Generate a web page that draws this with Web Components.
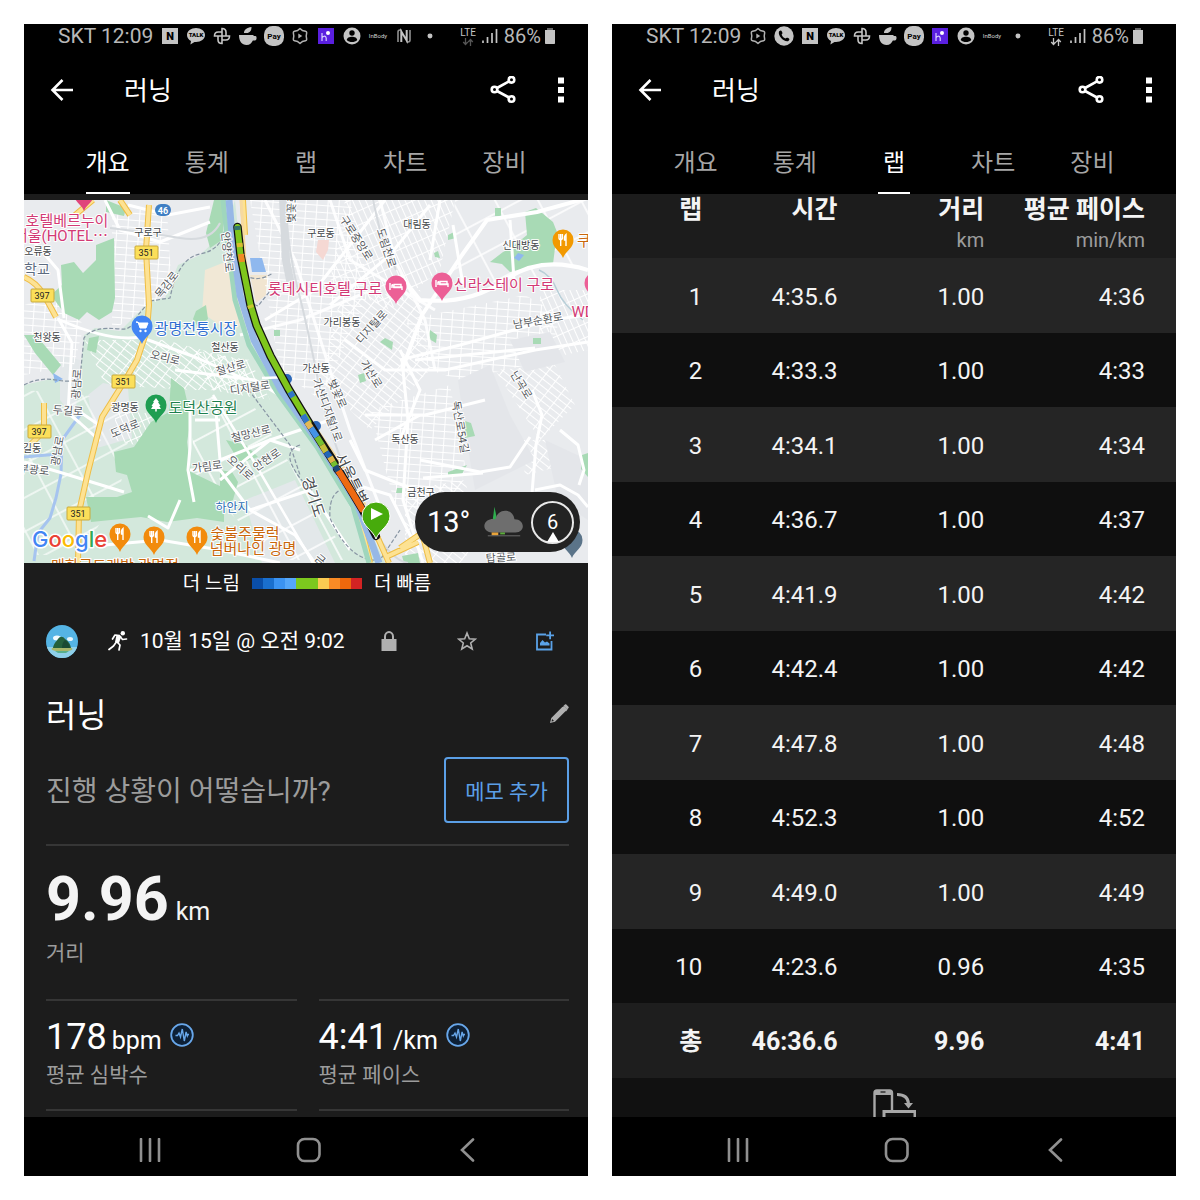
<!DOCTYPE html>
<html lang="ko">
<head>
<meta charset="utf-8">
<meta name="viewport" content="width=device-width, initial-scale=1">
<title>러닝</title>
<style>
  body { margin: 0; background: #fff; font-family: Roboto, "Noto Sans CJK KR", sans-serif; color: #fff; }
  main { display: grid; grid-template-columns: 1fr 1fr; gap: 24px; padding: 24px; height: 100vh; box-sizing: border-box; }
</style>
</head>
<body>
<main>
  <phone-screen>
    <status-bar slot="top" icons="naver talk pinwheel cup pay hex h person inbody nfc dot" dim-data></status-bar>
    <app-header slot="top">러닝</app-header>
    <tab-bar slot="top" active="0"></tab-bar>
    <activity-overview></activity-overview>
  </phone-screen>
  <phone-screen>
    <status-bar slot="top" icons="hex call naver talk pinwheel cup pay h person inbody dot"></status-bar>
    <app-header slot="top">러닝</app-header>
    <tab-bar slot="top" active="2"></tab-bar>
    <lap-table></lap-table>
  </phone-screen>
</main>

<script>
const ICONS = {
  naver: ['0 0 18 18', '<rect x="1" y="1" width="16" height="16" fill="#c4c4c4"/><text x="9" y="13" text-anchor="middle" font-size="11" font-weight="900" fill="#000">N</text>'],
  talk: ['0 0 18 18', '<path d="M9 1C4 1 0 4 0 8c0 2.700 1.700 4.800 4 6l-.6 3.500L7.500 15H9c5 0 9-3 9-7s-4-7-9-7z" fill="#c4c4c4"/><text x="9" y="10" text-anchor="middle" font-size="6" font-weight="900" fill="#000">TALK</text>'],
  pinwheel: ['0 0 18 18', '<g fill="none" stroke="#c4c4c4" stroke-width="1.600"><path d="M9 9V1.500C12.500 1.500 13 4 13 5.200V9zM9 9h7.500c0 3.500-2.500 4-3.700 4H9zM9 9v7.500C5.500 16.500 5 14 5 12.800V9zM9 9H1.500c0-3.500 2.500-4 3.700-4H9z"/></g>'],
  cup: ['0 0 18 18', '<path d="M0 8h14.500v1h2c1.500 0 1.500 4.500-.6 4.500h-2C12.500 16 11 18 7.500 18 3 18 0 14.500 0 8zM5 6C5 2.500 8 .5 12.500 0 12.500 3.500 11 6 7.500 6z" fill="#c4c4c4"/>'],
  pay: ['0 0 20 20', '<rect x="0" y="0" width="20" height="20" rx="8.500" fill="#c4c4c4"/><text x="10" y="13" text-anchor="middle" font-size="8" font-weight="700" fill="#000">Pay</text>'],
  hex: ['0 0 18 18', '<path d="M9 1.500l2.300 1.900 3.200.8c.8.200 1.200.7 1.200 1.500l-.5 3.300.5 3.300c0 .8-.4 1.300-1.200 1.500l-3.200.8L9 16.500l-2.300-1.900-3.200-.8c-.8-.2-1.200-.7-1.200-1.500L2.800 9l-.5-3.300c0-.8.4-1.300 1.200-1.500l3.200-.8z" fill="none" stroke="#b0b0b0" stroke-width="1.500" stroke-linejoin="round"/><path d="M7.300 6.500v5L11.300 9z" fill="#b0b0b0"/>'],
  call: ['0 0 20 20', '<circle cx="10" cy="10" r="9.700" fill="#c4c4c4"/><path d="M5 5.500c1.500-1.500 2.200-1.400 3 .2.800 1.500.4 2-.4 2.800.7 2 1.800 3.200 3.800 4 .9-.8 1.400-1.200 2.900-.4 1.500.9 1.500 1.500.1 3C10 16.500 3.500 9.500 5 5.500z" fill="#000"/>'],
  h: ['0 0 16 16', '<rect width="16" height="16" fill="#5a1fe0"/><path d="M4 5V13M4 9.500q3.500-3 4.200.5V13" fill="none" stroke="#d8ccff" stroke-width="1.200"/><circle cx="10" cy="5" r="2" fill="#fff"/>'],
  person: ['0 0 18 18', '<circle cx="9" cy="9" r="8.500" fill="#c4c4c4"/><circle cx="9" cy="6" r="2.700" fill="#000"/><path d="M3.800 13c0-4.500 10.400-4.500 10.400 0-2.500 2.700-7.900 2.700-10.400 0z" fill="#000"/>'],
  inbody: ['0 0 20 20', '<text x="10" y="12" text-anchor="middle" font-size="6" fill="#d4d4d4">InBody</text>'],
  nfc: ['0 0 18 18', '<path d="M3 15V5q0-2 2-2h1.500M15 3v10q0 2-2 2h-1.500" fill="none" stroke="#909090" stroke-width="1.600"/><path d="M6.300 15V4.500l5.400 9V3" fill="none" stroke="#c4c4c4" stroke-width="2"/>'],
  dot: ['0 0 18 18', '<circle cx="9" cy="9" r="2.800" fill="#c4c4c4"/>'],
  signal: ['0 0 16 16', '<path d="M1 15v-2.500M5.500 15v-6M10 15V5M14.500 15V1" stroke="#c4c4c4" stroke-width="1.700"/>'],
  battery: ['0 0 12 16', '<path d="M3 0h6v2H3z" fill="#666"/><path d="M1 2h10v13c0 .6-.4 1-1 1H2c-.6 0-1-.4-1-1z" fill="#c4c4c4"/>'],
  updown: ['0 0 12 8', '<path d="M3.500 0v6M1.200 4l2.300 2.500L5.800 4M8.500 8V1.500M6.200 4l2.300-2.500L10.800 4" fill="none" stroke="currentColor" stroke-width="1.300"/>'],
  back: ['0 0 24 24', '<path d="M23 12H3M12.500 2L2.500 12l10 10" fill="none" stroke="#fff" stroke-width="2.600"/>'],
  share: ['0 0 28 28', '<g fill="none" stroke="#fff" stroke-width="2.600"><circle cx="4.500" cy="13.500" r="2.800"/><circle cx="21.500" cy="3.800" r="2.800"/><circle cx="21.500" cy="23" r="2.800"/><path d="M7 12L19 5.300M7 15L19 21.500"/></g>'],
  more: ['0 0 8 28', '<path d="M1 1.500h6v6H1zM1 11h6v6H1zM1 20.500h6v6H1z" fill="#fff"/>'],
  runner: ['0 0 20 20', '<circle cx="14.800" cy="2.300" r="2.200" fill="#fff"/><path d="M4.500 8L7 4l4.500.5M12.500 6l2 2.500 4-.5M9 11l3 3-1 5M8 11.500L5.500 15 1 18.500" fill="none" stroke="#fff" stroke-width="1.700" stroke-linejoin="round" stroke-linecap="round"/><path d="M8.500 3.700l5 1.300-2.500 7-4-1z" fill="#fff"/>'],
  lock: ['0 0 16 20', '<path d="M.5 8h15v12H.5z" fill="#b0b0b0"/><path d="M4 9V5.500a4 4.500 0 018 0V9" fill="none" stroke="#b0b0b0" stroke-width="2"/>'],
  star: ['0 0 20 20', '<path d="M10 2l2.300 5.700 6.100.4-4.700 3.900 1.500 6L10 14.700 4.800 18l1.500-6L1.600 8.100l6.100-.4z" fill="none" stroke="#b0b0b0" stroke-width="1.600"/>'],
  addimg: ['0 0 20 20', '<path d="M11 3.500H2v15h14.500V10" fill="none" stroke="#5aa2e8" stroke-width="1.800"/><path d="M5 14.500V12l2.500-3 2.500 2.500 2-1 2.500 2v2zM14.200.500h1.800v3h3v1.800h-3v3h-1.800v-3h-3V3.500h3z" fill="#5aa2e8"/>'],
  pencil: ['0 0 20 20', '<path d="M1 19l1.300-5L13.500 2.800l3.700 3.700L6 17.700zM14.500 1.800L16 .500c.5-.4.900-.4 1.300 0L19.500 2.700c.4.400.4.900 0 1.300L18.200 5.500z" fill="#b0b0b0"/><path d="M2.500 17.500l.6-2.500 1.900 1.900z" fill="#1c1c1c"/><path d="M13 3.500l4 4 1.500-2-3.500-3.500z" fill="#b0b0b0"/>'],
  pulse: ['0 0 24 24', '<circle cx="12" cy="12" r="10.800" fill="#0d2036" stroke="#68a7ea" stroke-width="1.800"/><path d="M5.500 12.500h2l1.500-2.500 1.500 4 1.800-8 2 12 1.800-9 1.200 4 .7-1.500h1" fill="none" stroke="#68a7ea" stroke-width="1.400"/>'],
  recents: ['0 0 24 24', '<path d="M3 1v22M12 1v22M21 1v22" stroke="#909090" stroke-width="2.600" stroke-linecap="round"/>'],
  home: ['0 0 26 26', '<rect x="2" y="2" width="21.500" height="22" rx="6.500" fill="none" stroke="#909090" stroke-width="2.600"/>'],
  prev: ['0 0 24 24', '<path d="M17 1.500L6 12l11 10.500" fill="none" stroke="#909090" stroke-width="2.600" stroke-linecap="round"/>'],
  rotate: ['0 0 44 44', '<path d="M2.500 44V4Q2.500 1.500 5 1.500H17.500Q20 1.500 20 4V22" fill="none" stroke="#a8a8a8" stroke-width="2.400"/><path d="M3 1h17v5H3z" fill="#a8a8a8"/><path d="M8.500 3h5" stroke="#111" stroke-width="1.200"/><path d="M12 44V22.500H43V44" fill="none" stroke="#a8a8a8" stroke-width="3"/><path d="M25 5.500c7 0 11 3 11.500 9" fill="none" stroke="#a8a8a8" stroke-width="3"/><path d="M32 14h9l-4.500 5.500z" fill="#a8a8a8"/>'],
  avatar: ['0 0 32 33', '<clipPath id="a"><ellipse cx="16" cy="16.500" rx="16" ry="16.500"/></clipPath><g clip-path="url(#a)"><rect width="32" height="33" fill="#55b4e4"/><rect y="22" width="32" height="11" fill="#8fd0ea"/><ellipse cx="11" cy="13" rx="4" ry="2.500" fill="#f2fafd"/><ellipse cx="24" cy="14" rx="3" ry="2" fill="#e8f6fc"/><ellipse cx="16" cy="24" rx="10.500" ry="2.500" fill="#a9b66a"/><path d="M7 23c1-5 3-6 5-9 2-3 5-3 7 0 3 2 5 4 6 9z" fill="#25603c"/><path d="M16 23c0-4 1-6 3-8 3 2 4 4 5 8z" fill="#1a4a33"/><path d="M9 26h14l-3 2h-8z" fill="#58b08e"/></g>'],
  cloud: ['0 0 42 34', '<path d="M11 1l4.500 22H8z" fill="#2fae4e"/><path d="M8 28c-10-1-10-12-1-14 2-.5 4 0 5 .5C14 2 30 2 32 14c11 0 12 14 1 14z" fill="#6e6e6e"/><path d="M8 28h7v3H8z" fill="#e8a33a"/><path d="M17 28h5v2h-5z" fill="#5cae3a"/><path d="M4 31.500h34" stroke="#6e6e6e" stroke-width="1"/>'],
};

function define(name, html, setup) {
  const template = document.createElement('template');
  template.innerHTML = html;
  customElements.define(name, class extends HTMLElement {
    constructor() {
      super();
      this.attachShadow({ mode: 'open' }).append(template.content.cloneNode(true));
    }
    connectedCallback() { if (setup) setup(this, this.shadowRoot); }
  });
}
const BUTTON = 'button{background:none;border:0;padding:0;margin:0;font:inherit;color:inherit;display:flex;align-items:center;justify-content:center;cursor:pointer}';

define('ui-icon', '<style>:host{display:block;flex:none}svg{display:block;width:100%;height:100%;font-family:Roboto,sans-serif}</style>', (el, root) => {
  const [box, art] = ICONS[el.getAttribute('name')];
  const holder = document.createElement('template');
  holder.innerHTML = `<svg viewBox="${box}" aria-hidden="true">${art}</svg>`;
  root.append(holder.content);
  el.style.width = el.getAttribute('w') + 'px';
  el.style.height = (el.getAttribute('h') || el.getAttribute('w')) + 'px';
});

define('phone-screen', `<style>
  :host{display:flex;flex-direction:column;background:#000;min-width:0;min-height:0;overflow:hidden}
  .body{flex:1;min-height:0;overflow:hidden;background:#111}
</style>
<header><slot name="top"></slot></header>
<div class="body"><slot></slot></div>
<system-nav></system-nav>`);

define('status-bar', `<style>
  :host{display:flex;align-items:center;height:24px;padding:0 32px 0 34px;color:#b8b8b8;font-size:21px;line-height:24px;white-space:nowrap;--data:#c4c4c4}
  :host([dim-data]){--data:#555}
  .icons{display:flex;margin-left:4px}
  .cell{width:26px;display:flex;justify-content:center;align-items:center}
  .right{margin-left:auto;display:flex;align-items:center;gap:6px}
  .lte{display:flex;flex-direction:column;align-items:center;font-size:10px;line-height:11px;color:#c4c4c4}
  .lte ui-icon{color:var(--data)}
  .power{display:flex;align-items:center;gap:3px;font-size:20px}
</style>
<span>SKT 12:09</span><div class="icons"></div>
<div class="right"><div class="lte">LTE<ui-icon name="updown" w="12" h="8"></ui-icon></div><ui-icon name="signal" w="16"></ui-icon><div class="power">86%<ui-icon name="battery" w="12" h="16"></ui-icon></div></div>`,
(el, root) => {
  const big = { naver: 18, talk: 18, pinwheel: 18, cup: 18, pay: 20, call: 20, inbody: 20, hex: 18, nfc: 18, person: 18 };
  root.querySelector('.icons').innerHTML = el.getAttribute('icons').split(' ')
    .map(n => `<span class="cell"><ui-icon name="${n}" w="${big[n] || 16}"></ui-icon></span>`).join('');
});

define('app-header', `<style>
  :host{display:flex;align-items:center;height:84px;padding:0 23px 0 26px}
  h1{margin:0 auto 0 50px;padding-top:2px;font-size:26px;line-height:36px;font-weight:400}
  ${BUTTON} .more{margin-left:39px}
</style>
<button aria-label="뒤로"><ui-icon name="back" w="24"></ui-icon></button>
<h1><slot></slot></h1>
<button aria-label="공유"><ui-icon name="share" w="28"></ui-icon></button>
<button class="more" aria-label="더보기"><ui-icon name="more" w="8" h="28"></ui-icon></button>`);

define('tab-bar', `<style>
  :host{display:block}
  nav{display:grid;grid-template-columns:repeat(5,1fr);justify-items:center;padding:0 34px;height:62px}
  ${BUTTON}
  button{box-sizing:border-box;min-width:32px;padding-top:1px;font-size:24px;line-height:32px;color:#a6a6a6;border-bottom:2px solid transparent}
  button[aria-current]{color:#fff;border-color:#fff}
</style><nav></nav>`, (el, root) => {
  root.querySelector('nav').innerHTML = ['개요', '통계', '랩', '차트', '장비']
    .map((t, i) => `<button${i == el.getAttribute('active') ? ' aria-current="page"' : ''}>${t}</button>`).join('');
});

define('system-nav', `<style>
  :host{display:grid;grid-template-columns:repeat(3,1fr);height:59px;padding:6px 41px 0 46px;box-sizing:border-box;background:#000}
  ${BUTTON}
</style>
<button aria-label="최근 앱"><ui-icon name="recents" w="24"></ui-icon></button>
<button aria-label="홈"><ui-icon name="home" w="26"></ui-icon></button>
<button aria-label="이전"><ui-icon name="prev" w="24"></ui-icon></button>`);

/* Map labels: centre x, centre y, text, style, rotation */
const LABELS = [
  [67,221,'호텔베르누이','pink'],[61,236,'서울(HOTEL⋯','pink'],[38,251,'오류동'],[37,269,'학교','school'],[148,232,'구로구'],
  [167,285,'목감로','road',-52],[47,337,'천왕동'],[196,329,'광명전통시장','blue'],[165,358,'오리로','road',14],
  [225,347,'철산동'],[231,368,'철산로','road',-16],[250,388,'디지털로','road',-8],[227,252,'안양천로','road',84],
  [292,208,'벚꽃로','road',-88],[321,233,'구로동'],[356,238,'구로중앙로','road',57],[386,248,'도림천로','road',72],[417,224,'대림동'],
  [325,289,'롯데시티호텔 구로','pink'],[342,322,'가리봉동'],[372,327,'디지털로','road',-48],[316,368,'가산동'],[371,374,'가산로','road',58],
  [521,245,'신대방동'],[584,241,'쿠','orange'],[504,285,'신라스테이 구로','pink'],[583,312,'WD','pink'],[538,321,'남부순환로','road',-10],
  [521,385,'난곡로','road',58],[77,384,'광남로','road',-86],[68,411,'두길로','road',4],[125,407,'광명동'],[125,429,'도덕로','road',-22],
  [203,408,'도덕산공원','park'],[32,448,'길동'],[58,451,'광남로','road',-80],[34,470,'부광로','road',6],[207,467,'가림로','road',-8],
  [251,434,'철망산로','road',-14],[240,468,'오리로','road',42],[267,460,'안현로','road',-34],[232,508,'하안지','water'],
  [327,410,'가산디지털1로','road',70],[337,394,'벚꽃로','road',66],[351,479,'서울특별','city',64],[313,497,'경기도','city',72],
  [405,439,'독산동'],[460,427,'독산로54길','road',80],[421,492,'금천구'],[501,558,'탑골로','road',-4],
  [245,534,'숯불주물럭','orange'],[253,549,'넘버나인 광명','orange'],[115,566,'매화로드래방 광명점','orange'],[320,560,'금','road',40]
];
const SHIELDS = [[146,252,'351'],[42,295,'397'],[123,381,'351'],[39,431,'397'],[78,513,'351']];
const GLYPHS = {
  bed: '<path d="M-6-3v7M6 4V1h-11M-2-1.500h7V1.500h-7z" stroke="#fff" stroke-width="1.400" fill="none"/><circle cx="-3.500" cy="-.8" r="1.200" fill="#fff"/>',
  cart: '<path d="M-6-4h2l2 6h6l2-5h-9z" fill="#fff" stroke="#fff"/><circle cx="-1.500" cy="5" r="1.200" fill="#fff"/><circle cx="3.500" cy="5" r="1.200" fill="#fff"/>',
  fork: '<path d="M-4-6v4q0 1.500 1.700 1.500T-.6-2v-4M-2.300-6V6M3 6V-5.500Q1-4 1.500 0H3" fill="none" stroke="#fff" stroke-width="1.400"/>',
  tree: '<path d="M0-7l3 4H2l2.500 4H3.200L5 4H.8v2.500H-.8V4H-5l1.800-3H-4.500L-2-3h-1z" fill="#fff"/>',
  none: ''
};
const PINS = [
  [84,193,'#e0457b','none'],[396,286,'#ec5f96','bed'],[442,283,'#ec5f96','bed'],[595,283,'#ec5f96','none'],[563,240,'#f29900','fork'],
  [142,326,'#4285f4','cart'],[156,405,'#1e9e52','tree'],[120,534,'#f28b0c','fork'],[154,537,'#f28b0c','fork'],[197,537,'#f28b0c','fork'],[572,540,'#5b7489','none']
];
const PIN = 'M0 18C-2.500 11-10.500 8.500-10.500 0a10.500 10.500 0 0121 0C10.500 8.500 2.500 11 0 18z';

define('route-map', `<style>
  :host{display:block;position:relative;overflow:hidden}
  svg{display:block;width:100%;font-family:Roboto,"Noto Sans CJK KR",sans-serif}
  text{text-anchor:middle;dominant-baseline:central;font-size:10px;fill:#3f4448;paint-order:stroke;stroke:#fff;stroke-width:2px;stroke-linejoin:round}
  .pink{font-size:15px;fill:#d23a75}.orange{font-size:15px;fill:#c9670c}.blue{font-size:15px;fill:#2f6fd0}.park{font-size:15px;fill:#1d7f4d}
  .school{font-size:14px;fill:#5c6b80}.water{font-size:12px;fill:#2f6fb5}.road{font-size:11px;fill:#54585c}.city{font-size:15px;fill:#44484c}
  .shield{font-size:9px;fill:#222;stroke:none}.oval{font-size:9px;font-weight:700;fill:#fff;stroke:none}
  .google{font-family:Inter,sans-serif;font-weight:500;font-size:22px;text-anchor:start;stroke-width:3px}
  .weather{position:absolute;right:8px;bottom:11px;height:60px;width:165px;box-sizing:border-box;border-radius:30px;background:#232323;display:flex;align-items:center;padding:0 0 0 12px;font-size:29px;line-height:40px}
  .weather ui-icon{margin:0 7px 0 auto}
  .wind{position:relative;width:43px;height:43px;margin-right:6px;box-sizing:border-box;border:2px solid #e8e8e8;border-radius:50%;font-size:20px;line-height:39px;text-align:center}
  .wind::after{content:"";position:absolute;left:14px;bottom:0;border:6px solid transparent;border-top:0;border-bottom:10px solid #fff}
</style>
<svg viewBox="24 200 564 363" role="img" aria-label="경로 지도">
  <defs>
    <pattern id="g1" width="11" height="7" patternUnits="userSpaceOnUse" patternTransform="rotate(4)"><path d="M0 .5h11M.5 0v7" stroke="#fff" stroke-width="1"/></pattern>
    <pattern id="g2" width="6" height="13" patternUnits="userSpaceOnUse" patternTransform="rotate(-24)"><path d="M0 .5h6M.5 0v13" stroke="#fff" stroke-width="1"/></pattern>
    <pattern id="g3" width="12" height="6" patternUnits="userSpaceOnUse" patternTransform="rotate(38)"><path d="M0 .5h12M.5 0v6" stroke="#fff" stroke-width="1"/></pattern>
    <pattern id="g4" width="38" height="30" patternUnits="userSpaceOnUse" patternTransform="rotate(-28)"><path d="M0 1h38M1 0v30" stroke="#fff" stroke-width="1.500"/></pattern>
  </defs>
  <rect x="24" y="200" width="564" height="363" fill="#e9ebee"/>
  <path d="M24 385L55 378 80 376 84 335 95 328 120 331 135 316 150 300 165 298 178 265 200 255 220 236 230 215 235 200 240 250 247 310 262 350 290 400 320 440 350 490 372 535 385 563H24z" fill="#d3e8dc"/>
  <path d="M205 270l30-12 12 60-15 15-30-20z" fill="#f1e8d6"/><path d="M250 275l18 0-2 20-10 8z" fill="#f1e5d0"/>
  <path d="M88 395l15-12 25 5 4 50-35 10zM60 355l20 5-5 60-15-20zM245 500l50-20 40 83H262z" fill="#e3e8ea"/>
  <path d="M112 210h55l5 80-35 25-25 15zM24 305l30-10 30 30-10 40-50 10z" fill="url(#g1)"/>
  <path d="M85 340l80 0 75 20 15 30-60 0-90-5z" fill="url(#g3)"/>
  <path d="M24 390l60 5 50 10-15 90-40 60H24z" fill="url(#g4)" opacity=".8"/>
  <path d="M115 410l50 5-30 30-20-5zM190 350l60 10 20 40-60-10z" fill="url(#g2)"/>
  <path d="M190 395l60 5 100 160-70 0-85-80z" fill="url(#g4)"/>
  <path d="M250 200h100l20 90-50 110-40-30z" fill="url(#g1)"/>
  <path d="M345 200h110l-15 70-50 40-60-30z" fill="url(#g2)"/>
  <path d="M455 200h133v60l-50 20-90 5z" fill="url(#g4)"/>
  <path d="M340 300l80-10 10 80-60 60-50-50z" fill="url(#g3)"/>
  <path d="M405 320l120-25 35 20-10 45-90 20-30-10z" fill="url(#g1)"/>
  <path d="M370 410l80-25 15 80-10 50-60-10z" fill="url(#g1)"/>
  <path d="M495 370l60-5 20 40-35 35zM520 440l30 0 15 25-40 10zM405 490l60-10 15 60-20 23-55 0z" fill="url(#g3)"/>
  <path d="M540 290h48v60l-48 10z" fill="url(#g2)"/>
  <path d="M458 380l32-15 20 50 25 45-60 30-10-60zM545 440l43 20v60l-30-20zM510 340l40-8 15 30-40 10z" fill="#e4e6ea"/>
  <!-- parks -->
  <g fill="#a8dab5">
    <path d="M61 265L74 262 83 273 96 260 96 245 114 238 115 298 112 312 99 320 87 312 79 320 64 313 51 295 62 285z"/>
    <path d="M490 262L503 252 511 248 527 235 525 212 536 208 553 222 557 232 553 264 530 267 510 272 502 264z"/>
    <path d="M171 378L184 388 191 418 187 442 191 472 224 488 224 522 197 518 167 522 141 517 91 522 86 497 117 497 132 492 127 475 116 472 114 452 134 447 151 422 169 412z"/>
    <path d="M220 470l12 2 6 10-5 18-13 6z"/>
    <path d="M226 440l20 5 12 12-18 6zM196 311l10-6 2 14-10 8-5-8zM89 338l10-2-3 17-9-3zM24 335l12 0 25 30-8 10-18-22z"/>
    <path d="M214 200h12l-4 40-12 8-4-15zM106 200l20 8-2 8-18-4z"/>
    <path d="M448 235l6-3 2 6-8 2zM434 253l4-2 2 7-5-1zM495 208h6v8h-6zM430 330l7 5-1 8-7-4zM533 338h8v6h-8zM385 338l8 4-1 8-12-8z"/>
    <path d="M465 421l6 2 4 13-10 2zM448 472l19-7-5 9-14 2zM582 455l6-2v24l-7-8zM358 375l6-2 2 8-6 2zM402 556l16-3 2 10h-16zM397 488h8v5h-9zM274 330h6v6h-6z"/>
  </g>
  <path d="M318 240l11 0-1 10-5 10-7-8z" fill="#f5d8d3"/>
  <!-- streams -->
  <path d="M24 457l35-3M80 415L62 440l-1 34-5 24-6 20-12 15-4 28" fill="none" stroke="#a6c4ef" stroke-width="3"/>
  <path d="M539 270q12 5 18 20t26 30" fill="none" stroke="#b8cfd8" stroke-width="1.500"/>
  <path d="M53 373l10 6-8 4zM518 253l6 2-5 6-5-3zM250 258l12 0 4 14-14 0z" fill="#8fb8ee"/>
  <!-- main streets -->
  <g fill="none" stroke="#fff" stroke-width="3" stroke-linejoin="round">
    <path d="M58 318l14 25-4 70 12 10 20 18M60 320q50 22 80 17l55 20 45 20M24 462l35 10 65 20M80 412l22 15M24 230l34 40 6 48"/>
    <path d="M190 400v48l-2 22 6 32M195 420h25M215 400l5 60 50-20 30 10M190 470l30 0 30 40 45 25 20 28"/>
    <path d="M175 370l80 10 40 25 75 135M220 480l50-40 60-20M250 510l60-20 40 60"/>
    <path d="M105 200l15 30 40 12 50-20M128 205l40 10 42-8M105 545l55-5 60 10 60 13M180 500l-12 28-20-12"/>
    <path d="M240 335l60-15 60-25M265 200l30 60 35 110 20 60 35 90M380 200l15 60 30 60 10 50M330 200l20 60 85 50" opacity=".9"/>
    <path d="M345 340l40 30 60 0 90-20 53-8M365 415h60l60-15M385 200l-70 90-50 30M430 205l-40 50-60 50M402 360l6 60-5 80 20 63"/>
    <path d="M402 370l20-55 40-60 25-35 50-8 51-14M400 275l20 25q50 5 85-20t83-10" stroke-width="4"/>
    <path d="M400 360l60-15 90-25 38-5M415 360l120-12M440 200l-10 60M510 220l4 60M453 225l10 60"/>
    <path d="M532 390l10 25-6 30-5 60M560 430l18 15 6 25-5 15M423 478l60-5M340 480l50 15 25 50M375 440l45-25"/>
    <path d="M400 350l20 40-20 50M420 460l60 12 30-5 20-30M535 490l25-5 18 10 10 12M350 440l15 30 50 20"/>
  </g>
  <g fill="none" stroke="#d6dade"><path d="M284 200q6 60 14 90t20 90 40 120 50 63" stroke-width="2"/><path d="M283 200l3 60 6 30" stroke-width="8"/><path d="M373 200l8 35 15 35M110 228q40 5 70 10t40-15" stroke-width="2"/></g>
  <path d="M24 385q15-8 32-5t24-2l4-40q8-12 36-9 12 2 18-14l12-14 20-3q8-40 30-44t25-26M245 385l45 60 10 30M300 445q-15 5-8 20t20 25M350 488q-22 0-20 30 20 45 50 42l20-30M245 275q12 8 28-2M243 300l15 6 16-20" fill="none" stroke="#8794a3" stroke-width="1.200" stroke-dasharray="4 2"/>
  <!-- yellow arterials -->
  <g fill="none" stroke-linejoin="round">
    <path d="M149 205l-3 45 3 55-2 25-10 30-13 22-22 35-14 55-9 40-1 51M24 277q12 5 20 18l12 22M44 403v28l-15 15M75 215l18-15M120 200l10 15M370 563l-12-50M377 536l12 27M388 556l30-14M400 548l22-15 8 30M243 200l2 35" stroke="#eebd45" stroke-width="6"/>
    <path d="M149 205l-3 45 3 55-2 25-10 30-13 22-22 35-14 55-9 40-1 51M24 277q12 5 20 18l12 22M44 403v28l-15 15M75 215l18-15M120 200l10 15M370 563l-12-50M377 536l12 27M388 556l30-14M400 548l22-15 8 30M243 200l2 35" stroke="#fde293" stroke-width="4"/>
  </g>
  <!-- river and banks -->
  <path d="M223 200l5 45 7 55 14 45 28 47 40 55 36 60 16 56" fill="none" stroke="#9fd6bd" stroke-width="5"/>
  <path d="M229 200l3 35 8 60 14 45 27 50 38 53 38 60 22 60" fill="none" stroke="#97b8e6" stroke-width="7"/>
  <path d="M241 200l4 60 10 60 24 55 31 45 35 50 20 35" fill="none" stroke="#f6d9a0" stroke-width="3"/>
  <path d="M262 378l30-1M213 395l40 65 60 103" stroke="#fff" stroke-width="2.500" fill="none"/>
  <circle cx="287" cy="379" r="5" fill="#2c68b8"/><circle cx="316" cy="426" r="5" fill="#2c68b8"/>
  <g id="names"></g>
  <!-- recorded track -->
  <g fill="none" stroke-linecap="round" stroke-linejoin="round">
    <path d="M237.500 227l3 28 4 20 6 30 6 20 14 31 18 33 12 20 16 26 18 28" stroke="#111" stroke-width="8.500"/>
    <path d="M337 469l4 5 12 20 9 15 14 27" stroke="#111" stroke-width="8"/>
    <path d="M338 470l15 24 9 15" stroke="#ee6a12" stroke-width="6.500"/>
    <path d="M237.500 227l3 28 4 20 6 30 6 20 14 31 18 33 12 20 8 13" stroke="#7fc61c" stroke-width="6"/>
  </g>
  <g fill="none" stroke-width="6">
    <path d="M237 226l.5 4" stroke="#33756b"/><path d="M239.500 243l.5 4" stroke="#d8bc2f"/><path d="M241 254l1 8" stroke="#f08a24"/><path d="M250 305l1 3" stroke="#c9c52f"/>
    <path d="M290 392l3 5" stroke="#3275c8"/><path d="M303 415l4 7" stroke="#3275c8"/><path d="M307 422l4 6" stroke="#e3b85a"/><path d="M311 428l6 9" stroke="#4593e5"/><path d="M317 437l5 8" stroke="#77bf30"/><path d="M322 445l4 7" stroke="#c4bd3a"/><path d="M326 452l4 5" stroke="#2266b8"/><path d="M330 457l3 5" stroke="#dfb449"/><path d="M333 462l3 5" stroke="#77bf30"/><path d="M335 466l3 5" stroke="#1d4879"/>
  </g>
  <g id="pins"></g>
  <path d="M376 539c-3-9-14-13-14-23a14 14 0 0128 0c0 10-11 14-14 23z" fill="#47ab0c" stroke="#fff" stroke-width="1"/><path d="M371 508v12l12-6z" fill="#fff"/>
  <text class="google" x="32" y="539"><tspan fill="#4285f4">G</tspan><tspan fill="#ea4335">o</tspan><tspan fill="#fbbc05">o</tspan><tspan fill="#4285f4">g</tspan><tspan fill="#34a853">l</tspan><tspan fill="#ea4335">e</tspan></text>
</svg>
<div class="weather"><span>13°</span><ui-icon name="cloud" w="40" h="34"></ui-icon><div class="wind">6</div></div>`,
(el, root) => {
  root.querySelector('#names').innerHTML =
    LABELS.map(([x, y, t, c = '', r = 0]) => `<text class="${c}" x="${x}" y="${y}" transform="rotate(${r} ${x} ${y})">${t}</text>`).join('') +
    SHIELDS.map(([x, y, t]) => `<rect x="${x - 11}" y="${y - 6}" width="23" height="13" rx="1" fill="#fbdf5a" stroke="#c9a93a"/><text class="shield" x="${x}" y="${y + 1}">${t}</text>`).join('') +
    '<rect x="155" y="204" width="16" height="12" rx="6" fill="#3f7fc4"/><text class="oval" x="163" y="211">46</text>';
  root.querySelector('#pins').innerHTML = PINS.map(([x, y, c, g]) =>
    `<g transform="translate(${x} ${y})"><path d="${PIN}" fill="${c}"/>${GLYPHS[g]}</g>`).join('');
});

define('stat-cell', `<style>
  :host{display:block;border-top:2px solid #363636;height:108px}
  :host([large]){height:153px}
  .value{display:flex;align-items:baseline;gap:5px;padding-top:16px;height:40px;font-size:36px;line-height:40px}
  .label{margin-top:3px;font-size:21px;line-height:30px;color:#9c9c9c}
  .unit{font-size:25px}
  ::slotted(ui-icon){align-self:flex-start;margin:6px 0 0 3px}
  :host([large]) .value{gap:7px;padding-top:23px;height:60px;font-size:61px;line-height:60px;font-weight:700;color:#f4f4f4}
  :host([large]) .unit{font-weight:400}
  :host([large]) .label{margin-top:9px}
</style>
<div class="value"><slot></slot><span class="unit"><slot name="unit"></slot></span><slot name="badge"></slot></div>
<div class="label"><slot name="label"></slot></div>`);

define('speed-legend', `<style>
  :host{display:flex;justify-content:center;align-items:center;gap:12px;height:40px;padding-left:2px;font-size:19px;line-height:26px}
  span{padding-top:2px}
  .scale{display:flex}.scale i{width:11px;height:11px}
</style><span>더 느림</span><div class="scale"></div><span>더 빠름</span>`, (el, root) => {
  root.querySelector('.scale').innerHTML = ['#0a4ea8','#1a6fce','#3b93f2','#55a7fa','#7cc81e','#7cc81e','#fbcb52','#f98b25','#ee680c','#d32323'].map(c => `<i style="background:${c}"></i>`).join('');
});

define('activity-overview', `<style>
  :host{display:block;min-height:100%;background:#1c1c1c;padding-top:6px}
  ${BUTTON}
  .meta{display:flex;align-items:center;height:76px;padding:0 4px 0 22px;font-size:21px;line-height:30px;white-space:nowrap}
  .run{margin:0 12px 0 30px}
  .actions{margin-left:auto;display:grid;grid-template-columns:repeat(3,78px)}
  .inset{padding:0 19px 0 22px}
  .title{display:flex;align-items:center;justify-content:space-between;height:70px}
  h2{margin:0;padding-top:4px;font-size:33px;line-height:44px;font-weight:400}
  .note{display:flex;align-items:center;justify-content:space-between;margin:8px 0 21px}
  p{margin:0;padding-top:4px;font-size:28px;line-height:40px;color:#9c9c9c}
  .add{width:125px;height:66px;border:2px solid #5b9fe6;border-radius:4px;color:#5b9fe6;font-size:21px}
  .grid{display:grid;grid-template-columns:1fr 1fr;column-gap:22px}
</style>
<route-map></route-map>
<speed-legend></speed-legend>
<div class="meta">
  <ui-icon name="avatar" w="32" h="33"></ui-icon><ui-icon class="run" name="runner" w="20"></ui-icon><span>10월 15일 @ 오전 9:02</span>
  <div class="actions"><button aria-label="공개 범위"><ui-icon name="lock" w="16" h="20"></ui-icon></button><button aria-label="즐겨찾기"><ui-icon name="star" w="20"></ui-icon></button><button aria-label="사진 추가"><ui-icon name="addimg" w="20"></ui-icon></button></div>
</div>
<div class="inset">
  <div class="title"><h2>러닝</h2><button aria-label="이름 편집"><ui-icon name="pencil" w="20"></ui-icon></button></div>
  <div class="note"><p>진행 상황이 어떻습니까?</p><button class="add">메모 추가</button></div>
  <stat-cell large>9.96<span slot="unit">km</span><span slot="label">거리</span></stat-cell>
  <div class="grid">
    <stat-cell>178<span slot="unit">bpm</span><ui-icon slot="badge" name="pulse" w="24"></ui-icon><span slot="label">평균 심박수</span></stat-cell>
    <stat-cell>4:41<span slot="unit">/km</span><ui-icon slot="badge" name="pulse" w="24"></ui-icon><span slot="label">평균 페이스</span></stat-cell>
    <stat-cell></stat-cell><stat-cell></stat-cell>
  </div>
</div>`);

define('lap-table', `<style>
  :host{display:block;background:#111}
  table{width:100%;table-layout:fixed;border-collapse:collapse;text-align:right;font-size:25px;color:#f4f4f4}
  th,td{padding:0;white-space:nowrap;line-height:32px}
  th:last-child,td:last-child{padding-right:31px}
  thead{background:#1c1c1c}
  thead tr{height:64px}
  thead th{vertical-align:top}
  small{display:block;font-size:20px;line-height:28px;font-weight:400;color:#9c9c9c}
  tbody tr{height:74px;background:#0f0f0f}
  tbody tr:nth-child(odd){height:75px;background:#252525}
  tbody th,tbody td,tfoot th,tfoot td{padding-top:2px}
  tbody{font-size:24px}
  tbody th{font-weight:400}
  tfoot tr{height:75px;background:#1e1e1e;font-weight:700}
  ui-icon{margin:11px auto 0}
</style>
<table>
  <colgroup><col style="width:16%"><col style="width:24%"><col style="width:26%"><col style="width:34%"></colgroup>
  <thead><tr><th scope="col">랩</th><th scope="col">시간</th><th scope="col">거리<small>km</small></th><th scope="col">평균 페이스<small>min/km</small></th></tr></thead>
  <tbody></tbody>
  <tfoot><tr><th scope="row">총</th><td>46:36.6</td><td>9.96</td><td>4:41</td></tr></tfoot>
</table>
<ui-icon name="rotate" w="44"></ui-icon>`, (el, root) => {
  const laps = [['4:35.6','4:36'],['4:33.3','4:33'],['4:34.1','4:34'],['4:36.7','4:37'],['4:41.9','4:42'],['4:42.4','4:42'],['4:47.8','4:48'],['4:52.3','4:52'],['4:49.0','4:49'],['4:23.6','4:35']];
  root.querySelector('tbody').innerHTML = laps.map(([t, p], i) =>
    `<tr><th scope="row">${i + 1}</th><td>${t}</td><td>${i === 9 ? '0.96' : '1.00'}</td><td>${p}</td></tr>`).join('');
});
</script>
</body>
</html>
